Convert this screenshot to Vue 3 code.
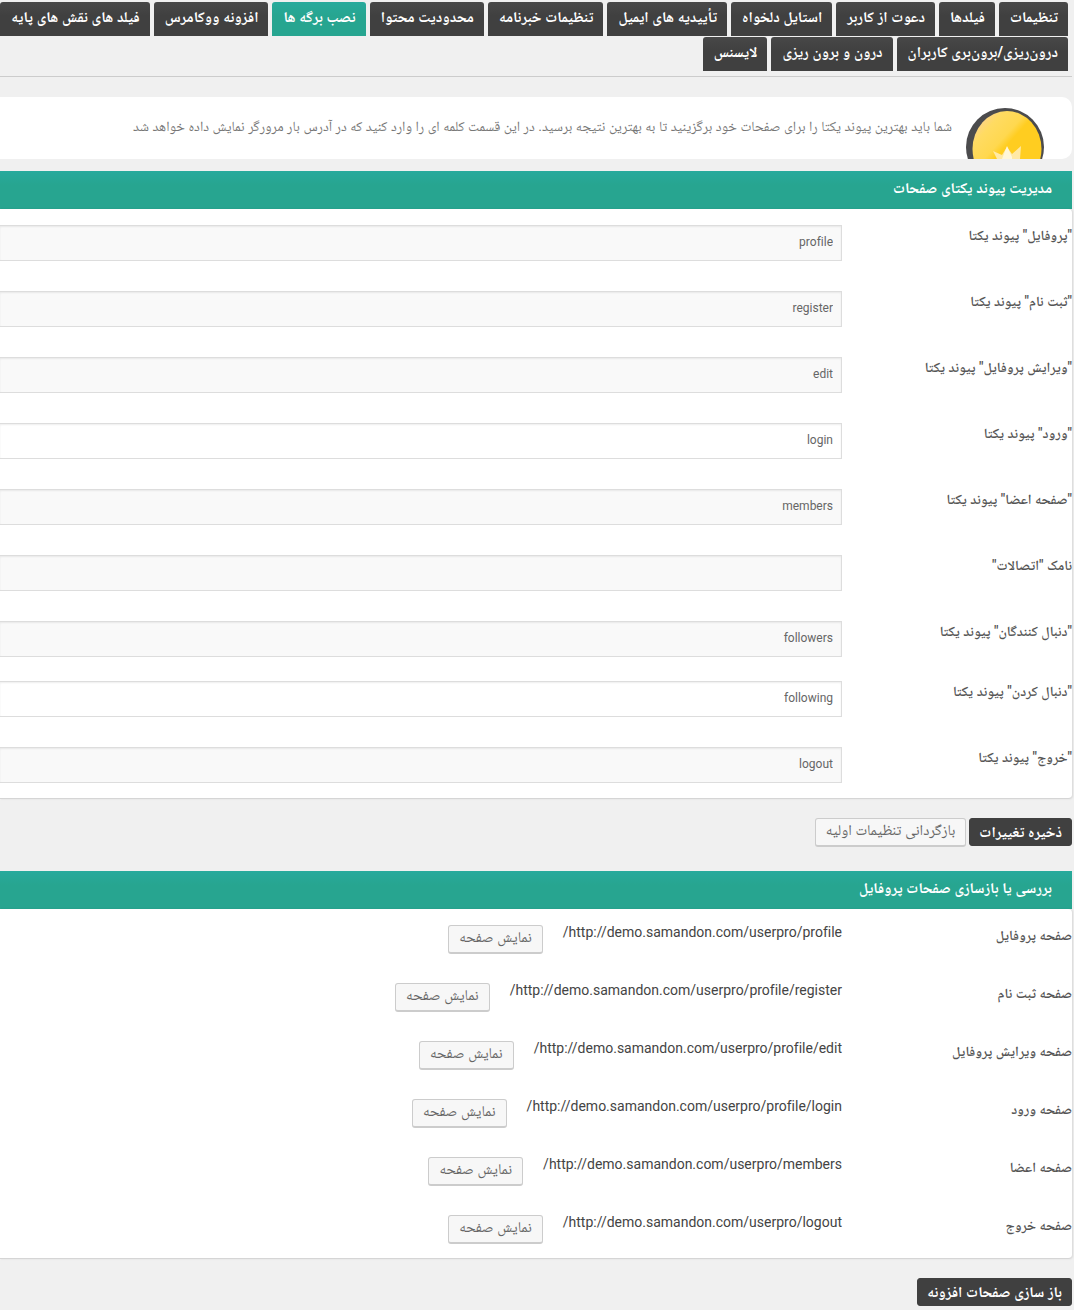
<script setup>
import { ref } from 'vue'

const tabs = [
  'تنظیمات', 'فیلدها', 'دعوت از کاربر', 'استایل دلخواه', 'تأییدیه های ایمیل',
  'تنظیمات خبرنامه', 'محدودیت محتوا', 'نصب برگه ها', 'افزونه ووکامرس',
  'فیلد های نقش های پایه', 'درون‌ریزی/برون‌بری کاربران', 'درون و برون ریزی', 'لایسنس',
]
const activeTab = ref(7)

const slugs = ref([
  { id: 'profile', label: '"پروفایل" پیوند یکتا', value: 'profile' },
  { id: 'register', label: '"ثبت نام" پیوند یکتا', value: 'register' },
  { id: 'edit', label: '"ویرایش پروفایل" پیوند یکتا', value: 'edit' },
  { id: 'login', label: '"ورود" پیوند یکتا', value: 'login', plain: true },
  { id: 'members', label: '"صفحه اعضا" پیوند یکتا', value: 'members' },
  { id: 'connections', label: 'نامک "اتصالات"', value: '' },
  { id: 'followers', label: '"دنبال کنندگان" پیوند یکتا', value: 'followers', tight: true },
  { id: 'following', label: '"دنبال کردن" پیوند یکتا', value: 'following', plain: true },
  { id: 'logout', label: '"خروج" پیوند یکتا', value: 'logout' },
])

const base = 'http://demo.samandon.com/userpro/'
const pages = [
  { label: 'صفحه پروفایل', path: 'profile/' },
  { label: 'صفحه ثبت نام', path: 'profile/register/' },
  { label: 'صفحه ویرایش پروفایل', path: 'profile/edit/' },
  { label: 'صفحه ورود', path: 'profile/login/' },
  { label: 'صفحه اعضا', path: 'members/' },
  { label: 'صفحه خروج', path: 'logout/' },
]
</script>

<template>
  <main class="page" dir="rtl" lang="fa">
    <nav class="tabs">
      <a
        v-for="(tab, i) in tabs"
        :key="tab"
        href="#"
        class="tab"
        :class="{ active: i === activeTab }"
        @click.prevent="activeTab = i"
      >{{ tab }}</a>
    </nav>

    <section class="notice">
      <svg class="coin" viewBox="0 0 80 52" aria-hidden="true">
        <defs>
          <linearGradient id="gold" x1="0.1" y1="0.05" x2="0.6" y2="0.55">
            <stop offset="0" stop-color="#fbcf9c" />
            <stop offset="0.3" stop-color="#ffdb62" />
            <stop offset="0.65" stop-color="#ffd84f" />
            <stop offset="0.8" stop-color="#ffcd20" />
          </linearGradient>
        </defs>
        <ellipse cx="39" cy="40" rx="39" ry="39" fill="#4b4b4d" />
        <ellipse cx="41" cy="42" rx="34.500" ry="38" fill="url(#gold)" />
        <path d="M27 44 L36 48 L41 40 L46 47 L55 39 L54 52 L31 52 Z" fill="#ffe9a6" />
        <path d="M41 39 L46 50 L46 52 L36 52 Z" fill="#fff7da" />
      </svg>
      <p>شما باید بهترین پیوند یکتا را برای صفحات خود برگزینید تا به بهترین نتیجه برسید. در این قسمت کلمه ای را وارد کنید که در آدرس بار مرورگر نمایش داده خواهد شد</p>
    </section>

    <form @submit.prevent>
      <h3 class="heading">مدیریت پیوند یکتای صفحات</h3>
      <div class="panel slugs">
        <div v-for="s in slugs" :key="s.id" class="slug-row" :class="{ tight: s.tight }">
          <label :for="s.id">{{ s.label }}</label>
          <input :id="s.id" v-model="s.value" type="text" :class="{ plain: s.plain }">
        </div>
      </div>
      <div class="actions">
        <button type="submit" class="btn primary">ذخیره تغییرات</button>
        <button type="button" class="btn">بازگردانی تنظیمات اولیه</button>
      </div>

      <h3 class="heading">بررسی یا بازسازی صفحات پروفایل</h3>
      <div class="panel pages">
        <div v-for="p in pages" :key="p.path" class="page-row">
          <span class="name">{{ p.label }}</span>
          <span class="url">{{ base + p.path }}</span>
          <a :href="base + p.path" class="btn">نمایش صفحه</a>
        </div>
      </div>
      <div class="actions">
        <button type="button" class="btn primary">باز سازی صفحات افزونه</button>
      </div>
    </form>
  </main>
</template>

<style>
body {
  background: #f0f0f0;
}
</style>

<style scoped>
.page {
  padding: 2px 2px 4px 0;
  font-family: Roboto, "Noto Naskh Arabic", "Noto Sans Arabic", "DejaVu Sans", sans-serif;
  font-size: 14px;
  font-variant-ligatures: no-common-ligatures;
  color: #444;
  overflow: hidden;
}
.tabs {
  display: flex;
  flex-wrap: wrap;
  gap: 1px 4px;
  padding: 0 4px 5px 0;
  margin-left: -8px;
  border-bottom: 1px solid #ccc;
}
.tab {
  box-sizing: border-box;
  height: 34px;
  padding: 0 10px 0 11px;
  border-radius: 3px 3px 0 0;
  background: linear-gradient(#484848, #404040 14px);
  color: #fff;
  font-size: 15px;
  font-weight: 700;
  line-height: 31px;
  text-decoration: none;
  white-space: nowrap;
}
.tab.active {
  background: linear-gradient(#27aa9c, #27a590 14px);
}
.notice {
  display: flex;
  gap: 14px;
  height: 62px;
  margin: 20px 0 12px;
  padding-right: 26px;
  border-radius: 0 10px 10px 0;
  background: #fff;
  overflow: hidden;
}
.coin {
  flex: none;
  width: 80px;
  height: 52px;
  margin-top: 10px;
}
.notice p {
  margin: 0;
  line-height: 58px;
  color: #777;
  white-space: nowrap;
}
.heading {
  height: 38px;
  margin: 0;
  padding-right: 20px;
  background: linear-gradient(#27aa9c, #27a590 14px);
  color: #fff;
  font-size: 15px;
  font-weight: 700;
  line-height: 35px;
}
.panel {
  border-bottom: 1px solid #d5d5d5;
  border-radius: 0 4px 4px 0;
  background: #fff;
  box-shadow: 1px 0 2px rgba(0, 0, 0, 0.1);
}
.slugs {
  padding: 16px 0 15px;
}
.slug-row {
  display: flex;
  margin-bottom: 30px;
}
.slug-row.tight {
  margin-bottom: 24px;
}
.slug-row:last-child {
  margin-bottom: 0;
}
label,
.name {
  flex: none;
  width: 230px;
  color: #555;
  font-weight: 600;
  line-height: 20px;
}
input {
  box-sizing: border-box;
  flex: 1;
  min-width: 0;
  height: 36px;
  padding: 0 8px 2px;
  border: 1px solid #ddd;
  border-left: 0;
  border-radius: 0;
  background: #f9f9f9;
  box-shadow: inset 0 1px 2px rgba(0, 0, 0, 0.07);
  color: #666;
  font-family: inherit;
  font-size: 12px;
  font-variant-ligatures: inherit;
}
input.plain {
  background: #fff;
}
.actions {
  display: flex;
  gap: 3px;
  padding: 19px 0 24px;
}
.actions:last-child {
  padding-bottom: 0;
}
.btn {
  box-sizing: border-box;
  height: 29px;
  padding: 0 10px;
  border: 1px solid #ccc;
  border-bottom-width: 2px;
  border-radius: 3px;
  background: #f7f7f7;
  color: #666;
  font-family: inherit;
  font-size: 15px;
  line-height: 23px;
  text-decoration: none;
  white-space: nowrap;
}
.actions .btn {
  padding-bottom: 3px;
}
.btn.primary {
  height: 28px;
  padding: 0 9px;
  border: 1px solid #404040;
  background: #404040;
  color: #fff;
  font-weight: 700;
}
.pages {
  padding: 16px 0 14px;
}
.page-row {
  display: flex;
  margin-bottom: 29px;
}
.page-row:last-child {
  margin-bottom: 0;
}
.url {
  margin-left: 20px;
  font-size: 14px;
  line-height: 14px;
}
</style>
